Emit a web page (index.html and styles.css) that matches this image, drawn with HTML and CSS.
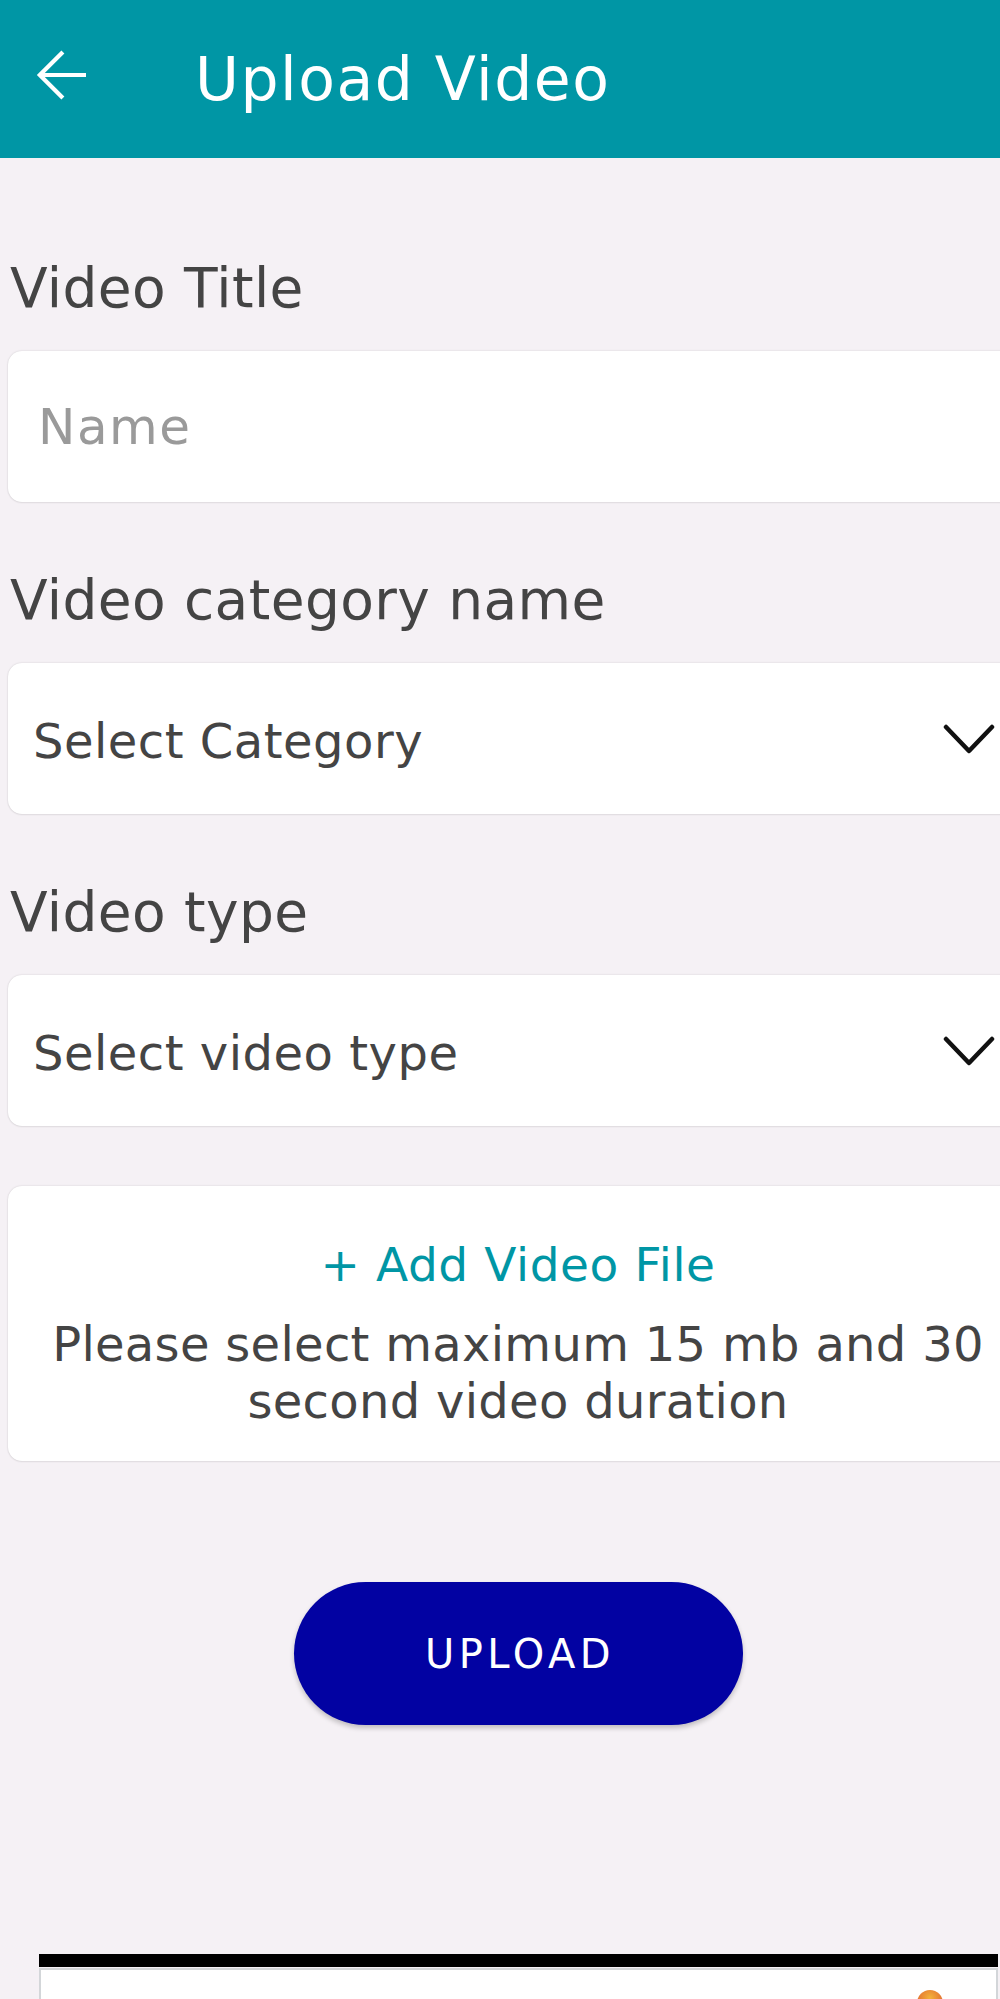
FILE: index.html
```html
<!DOCTYPE html>
<html>
  <head>
    <meta name="viewport" content="width=device-width, initial-scale=1.0" />
    <title>Upload Video</title>
    <link rel="stylesheet" href="styles.css">
  </head>
  <body>
    <div class="header">
      <div class="back">
        <svg width="72" height="72" viewBox="0 0 24 24">
          <path d="M20 12H4.6M12.3 4.3L4.6 12l7.7 7.7" fill="none" stroke="#fff" stroke-width="1.4" />
        </svg>
      </div>
      <h1>Upload Video</h1>
    </div>

    <div class="form">
      <div class="label">Video Title</div>
      <div class="card field">
        <input class="field-input" autocomplete="off" placeholder="Name" />
      </div>

      <div class="label">Video category name</div>
      <div class="card field select">
        <span>Select Category</span>
        <svg class="chevron" width="52" height="32" viewBox="0 0 52 32">
          <polyline points="3,4 26,28 49,4" fill="none" stroke="#111" stroke-width="4.5" stroke-linecap="round" stroke-linejoin="round" />
        </svg>
      </div>

      <div class="label">Video type</div>
      <div class="card field select">
        <span>Select video type</span>
        <svg class="chevron" width="52" height="32" viewBox="0 0 52 32">
          <polyline points="3,4 26,28 49,4" fill="none" stroke="#111" stroke-width="4.5" stroke-linecap="round" stroke-linejoin="round" />
        </svg>
      </div>

      <div class="card file-box">
        <div class="add-file">+ Add Video File</div>
        <p>Please select maximum 15 mb and 30 second video duration</p>
      </div>

      <div class="actions">
        <button class="upload">UPLOAD</button>
      </div>
    </div>

    <div class="ad">
      <div class="ad-bar"></div>
      <div class="ad-body">
        <span class="ad-dot"></span>
      </div>
    </div>
  </body>
</html>
```

FILE: styles.css
```css
  body {
    margin: 0;
    height: 1999px;
    overflow: hidden;
    font-family: "DejaVu Sans", "Liberation Sans", sans-serif;
    background-color: #f5f1f5; /* light lilac grey */
    color: #444;
  }

  .header {
    height: 158px;
    background: #0096a5;
    display: flex;
    align-items: center;
    box-sizing: border-box;
    padding-left: 26px;
  }

  .back {
    width: 72px;
    height: 72px;
    margin-bottom: 8px;
  }

  .back svg {
    display: block;
  }

  .header h1 {
    margin: 0 0 0 97px;
    font-size: 60px;
    line-height: 64px;
    letter-spacing: 1.5px;
    font-weight: normal;
    color: #fff;
  }

  .form {
    margin-left: 8px;
    width: 1020px;
    padding-top: 98px;
  }

  .label {
    font-size: 55px;
    line-height: 64px;
    padding-left: 2px;
    letter-spacing: 0.4px;
    color: #444;
  }

  .card {
    background: #fff;
    border-radius: 14px;
    box-shadow: 0 0 2px rgba(0, 0, 0, 0.16), 0 1px 2px rgba(0, 0, 0, 0.05);
  }

  .field {
    height: 151px;
    margin-top: 31px;
    margin-bottom: 66px;
    display: flex;
    align-items: center;
    box-sizing: border-box;
  }

  .field-input {
    border: none;
    outline: none;
    background: transparent;
    width: 100%;
    padding: 0 0 0 30px;
    font-family: inherit;
    font-size: 50px;
    line-height: 60px;
    letter-spacing: 1.5px;
    color: #444;
  }

  .field-input::placeholder {
    color: #9a9a9a;
  }

  .select {
    justify-content: space-between;
    padding: 0 33px 0 25px;
    font-size: 48px;
    line-height: 60px;
    letter-spacing: 0.5px;
  }

  .select span {
    margin-top: 4px;
  }

  .chevron {
    display: block;
  }

  .file-box {
    margin-top: -6px;
    padding: 49px 20px 31px;
    text-align: center;
  }

  .add-file {
    font-size: 47px;
    line-height: 60px;
    letter-spacing: 0.6px;
    color: #0096a5;
  }

  .file-box p {
    margin: 21px 0 0;
    font-size: 48px;
    line-height: 57px;
    letter-spacing: 0.3px;
    color: #444;
  }

  .actions {
    display: flex;
    justify-content: center;
    padding-top: 121px;
  }

  .upload {
    width: 449px;
    height: 143px;
    border: none;
    border-radius: 72px;
    background: #0202a2;
    color: #fff;
    font-family: inherit;
    font-size: 40px;
    letter-spacing: 4.5px;
    padding-left: 10px;
    box-shadow: 0 3px 5px rgba(0, 0, 0, 0.22);
  }

  .ad {
    margin-top: 229px;
    margin-left: 39px;
    margin-right: 2px;
    position: relative;
  }

  .ad-bar {
    height: 13px;
    background: #000;
  }

  .ad-body {
    height: 40px;
    margin-top: 1px;
    background: #fff;
    border: 2px solid #d3d6d9;
    border-bottom: none;
    position: relative;
  }

  .ad-dot {
    position: absolute;
    left: 876px;
    top: 20px;
    width: 26px;
    height: 26px;
    border-radius: 50%;
    background: radial-gradient(circle at 50% 30%, #f3b23a, #d9452b);
  }
```
